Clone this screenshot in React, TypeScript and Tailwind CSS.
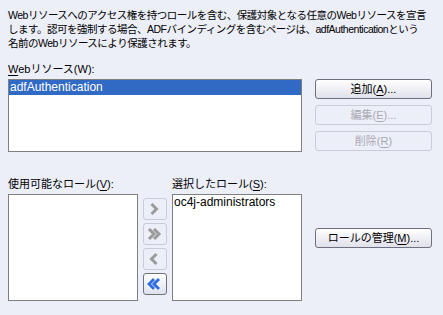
import React from "react";

const font = { fontFamily: '"Liberation Sans", "Noto Sans CJK JP", sans-serif' };

function U({ children }: { children: React.ReactNode }) {
  return <span className="underline underline-offset-2">{children}</span>;
}

function Btn({ children, disabled }: { children: React.ReactNode; disabled?: boolean }) {
  return (
    <div
      className={`h-[20px] w-[117px] flex items-center justify-center rounded-[3px] border text-[11px] ${
        disabled
          ? "border-[#c9cbd6] text-[#a9aab4]"
          : "border-[#6e7080] text-black bg-gradient-to-b from-white to-[#e0e1ea]"
      }`}
    >
      {children}
    </div>
  );
}

function Chevron({ dir, double, active }: { dir: "r" | "l"; double?: boolean; active?: boolean }) {
  const color = active ? "#2f6de0" : "#9b9b9b";
  const one = (x: number) =>
    dir === "r" ? `M${x} 2 L${x + 5} 7 L${x} 12` : `M${x + 5} 2 L${x} 7 L${x + 5} 12`;
  const paths = double ? [one(2), one(7)] : [one(4.5)];
  return (
    <svg width="16" height="14" viewBox="0 0 16 14">
      {active &&
        paths.map((d, i) => (
          <path key={"o" + i} d={d} fill="none" stroke="#ffffff" strokeWidth="5" strokeLinejoin="miter" />
        ))}
      {paths.map((d, i) => (
        <path key={i} d={d} fill="none" stroke={color} strokeWidth="3" strokeLinejoin="miter" />
      ))}
    </svg>
  );
}

function ShuttleBtn(props: { dir: "r" | "l"; double?: boolean; active?: boolean }) {
  return (
    <div
      className={`w-[24px] h-[22px] flex items-center justify-center rounded-[3px] border ${
        props.active ? "border-[#6e7080] bg-gradient-to-b from-white to-[#dfe1ec]" : "border-[#c9cbd6]"
      }`}
    >
      <Chevron {...props} />
    </div>
  );
}

export default function App() {
  return (
    <div
      className="w-[443px] h-[315px] overflow-hidden bg-[#eceef8] text-black pl-[8px] pt-[8px]"
      style={font}
    >
      <p className="text-[10.5px] leading-[14px] tracking-[-0.5px] whitespace-nowrap">
        Webリソースへのアクセス権を持つロールを含む、保護対象となる任意のWebリソースを宣言
        <br />
        します。認可を強制する場合、ADFバインディングを含むページは、adfAuthenticationという
        <br />
        名前のWebリソースにより保護されます。
      </p>

      <div className="mt-[12px] text-[11px] leading-[14px]">
        <U>W</U>ebリソース(W):
      </div>
      <div className="flex mt-[3px]">
        <div className="w-[294px] h-[73px] border border-[#7f7f7f] bg-white">
          <div className="h-[15px] bg-[#316ac5] text-white text-[12px] leading-[15px] pl-[1px]">
            adfAuthentication
          </div>
        </div>
        <div className="ml-[13px] flex flex-col gap-[6px]">
          <Btn>
            追加(<U>A</U>)...
          </Btn>
          <Btn disabled>
            編集(<U>E</U>)...
          </Btn>
          <Btn disabled>
            削除(<U>R</U>)
          </Btn>
        </div>
      </div>

      <div className="flex mt-[25px]">
        <div>
          <div className="text-[11px] leading-[14px]">
            使用可能なロール(<U>V</U>):
          </div>
          <div className="mt-[3px] w-[130px] h-[107px] border border-[#7f7f7f] bg-white" />
        </div>
        <div className="ml-[5px] mt-[21px] flex flex-col gap-[3px]">
          <ShuttleBtn dir="r" />
          <ShuttleBtn dir="r" double />
          <ShuttleBtn dir="l" />
          <ShuttleBtn dir="l" double active />
        </div>
        <div className="ml-[5px]">
          <div className="text-[11px] leading-[14px]">
            選択したロール(<U>S</U>):
          </div>
          <div className="mt-[3px] w-[130px] h-[107px] border border-[#7f7f7f] bg-white">
            <div className="text-[12px] leading-[15px] pl-[1px]">oc4j-administrators</div>
          </div>
        </div>
        <div className="ml-[13px] mt-[51px]">
          <Btn>
            ロールの管理(<U>M</U>)...
          </Btn>
        </div>
      </div>
    </div>
  );
}
